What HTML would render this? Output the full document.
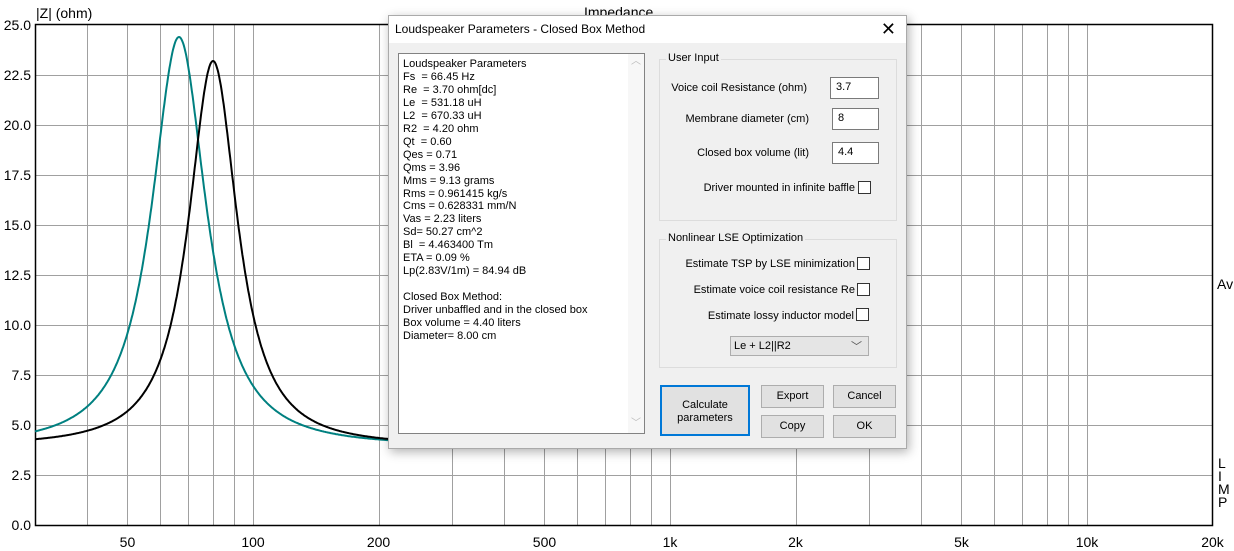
<!DOCTYPE html>
<html><head><meta charset="utf-8">
<style>
*{margin:0;padding:0;box-sizing:border-box}
body{width:1234px;height:551px;background:#fff;position:relative;overflow:hidden;font-family:"Liberation Sans",sans-serif}
.lbl{position:absolute;font-size:14px;color:#000;line-height:16px}
#dlg{position:absolute;left:388px;top:15px;width:519px;height:434px;background:#f0f0f0;border:1px solid #aaa;box-shadow:2px 3px 10px rgba(0,0,0,.3);font-size:12px}
#title{height:27px;background:#fff;position:relative;font-size:12px;line-height:27px;padding-left:6px}
#close{position:absolute;right:10px;top:0;font-size:18px;line-height:27px;font-weight:300}
#txt{position:absolute;left:9px;top:37px;width:247px;height:381px;background:#fff;border:1px solid #828282;font-size:11px;line-height:12.95px;padding:4px 0 0 4px;white-space:pre}
#sb{position:absolute;right:0;top:0;width:16px;height:100%;background:#f7f7f7}
.grp{position:absolute;border:1px solid #dcdcdc}
.gt{position:absolute;top:-8px;left:6px;background:#f0f0f0;padding:0 2px;font-size:11px}
.r{position:absolute;font-size:11px;text-align:right;white-space:nowrap}
.in{position:absolute;width:48px;height:22px;background:#fff;border:1px solid #7a7a7a;font-size:11px;padding:3px 0 0 5px}
.cb{position:absolute;width:13px;height:13px;border:1px solid #333;background:#fff}
.btn{position:absolute;background:#e1e1e1;border:1px solid #adadad;font-size:11px;text-align:center}
</style></head><body>
<svg id="plot" width="1234" height="551" style="position:absolute;left:0;top:0"></svg>
<div class="lbl" style="left:36px;top:5px">|Z| (ohm)</div>
<div class="lbl" style="left:584px;top:4px">Impedance</div>
<div class="lbl" style="left:1217px;top:276px">Av</div>
<div class="lbl" style="left:1218px;top:457px;line-height:13px">L<br>I<br>M<br>P</div>
<div id="dlg">
 <div id="title">Loudspeaker Parameters - Closed Box Method<span id="close">✕</span></div>
 <div id="txt">Loudspeaker Parameters
Fs  = 66.45 Hz
Re  = 3.70 ohm[dc]
Le  = 531.18 uH
L2  = 670.33 uH
R2  = 4.20 ohm
Qt  = 0.60
Qes = 0.71
Qms = 3.96
Mms = 9.13 grams
Rms = 0.961415 kg/s
Cms = 0.628331 mm/N
Vas = 2.23 liters
Sd= 50.27 cm^2
Bl  = 4.463400 Tm
ETA = 0.09 %
Lp(2.83V/1m) = 84.94 dB

Closed Box Method:
Driver unbaffled and in the closed box
Box volume = 4.40 liters
Diameter= 8.00 cm<div id="sb"><span style="position:absolute;left:3px;top:2px;color:#bbb;font-size:10px">︿</span><span style="position:absolute;left:3px;bottom:2px;color:#bbb;font-size:10px">﹀</span></div></div>
 <div class="grp" style="left:270px;top:43px;width:238px;height:162px"><span class="gt">User Input</span></div>
 <div class="r" style="left:200px;top:66px;width:218px">Voice coil Resistance (ohm)</div>
 <div class="in" style="left:441px;top:61px;width:49px">3.7</div>
 <div class="r" style="left:200px;top:97px;width:220px">Membrane diameter (cm)</div>
 <div class="in" style="left:443px;top:92px;width:47px">8</div>
 <div class="r" style="left:200px;top:131px;width:220px">Closed box volume (lit)</div>
 <div class="in" style="left:443px;top:126px;width:47px">4.4</div>
 <div class="r" style="left:200px;top:166px;width:266px">Driver mounted in infinite baffle</div>
 <div class="cb" style="left:469px;top:165px"></div>
 <div class="grp" style="left:270px;top:223px;width:238px;height:129px"><span class="gt">Nonlinear LSE Optimization</span></div>
 <div class="r" style="left:200px;top:242px;width:266px">Estimate TSP by LSE minimization</div>
 <div class="cb" style="left:468px;top:241px"></div>
 <div class="r" style="left:200px;top:268px;width:266px">Estimate voice coil resistance Re</div>
 <div class="cb" style="left:468px;top:267px"></div>
 <div class="r" style="left:200px;top:294px;width:265px">Estimate lossy inductor model</div>
 <div class="cb" style="left:467px;top:292px"></div>
 <div style="position:absolute;left:341px;top:320px;width:139px;height:20px;background:#e5e5e5;border:1px solid #adadad;font-size:11px;padding:3px 0 0 3px">Le + L2||R2<span style="position:absolute;right:6px;top:1px;color:#555">﹀</span></div>
 <div class="btn" style="left:271px;top:369px;width:90px;height:51px;border:2px solid #0078d7;padding-top:12px;line-height:13px">Calculate<br>parameters</div>
 <div class="btn" style="left:372px;top:369px;width:63px;height:23px;line-height:21px">Export</div>
 <div class="btn" style="left:444px;top:369px;width:63px;height:23px;line-height:21px">Cancel</div>
 <div class="btn" style="left:372px;top:399px;width:63px;height:23px;line-height:21px">Copy</div>
 <div class="btn" style="left:444px;top:399px;width:63px;height:23px;line-height:21px">OK</div>
</div>
<script>
var s=document.getElementById('plot'),h='';
function X(f){return 253+417*Math.log10(f/100)}
function Y(z){return 525-z*20}
var fs=[40,50,60,70,80,90,100,200,300,400,500,600,700,800,900,1000,2000,3000,4000,5000,6000,7000,8000,9000,10000];
fs.forEach(function(f){var x=Math.round(X(f))+.5;h+='<line x1="'+x+'" y1="24" x2="'+x+'" y2="525" stroke="#a0a0a0"/>'});
for(var i=1;i<10;i++){var y=Y(i*2.5)+.5;h+='<line x1="35" y1="'+y+'" x2="1212" y2="'+y+'" stroke="#a0a0a0"/>'}
h+='<rect x="35.5" y="24.5" width="1177" height="501" fill="none" stroke="#000" stroke-width="1.5"/>';
for(var i=0;i<=10;i++){var z=i*2.5;h+='<text x="31" y="'+(Y(z)+5)+'" text-anchor="end" font-size="14" font-family="Liberation Sans">'+z.toFixed(1)+'</text>'}
[[50,'50'],[100,'100'],[200,'200'],[500,'500'],[1000,'1k'],[2000,'2k'],[5000,'5k'],[10000,'10k'],[20000,'20k']].forEach(function(a){h+='<text x="'+X(a[0])+'" y="547" text-anchor="middle" font-size="14" font-family="Liberation Sans">'+a[1]+'</text>'});
function curve(Re,Rm,f0,Q,p,col){var pt='';for(var f=30;f<700;f*=1.004){var x=Q*(f/f0-f0/f);var z=Re+Rm/Math.pow(1+x*x,p);pt+=(pt?'L':'M')+X(f).toFixed(1)+','+Y(z).toFixed(1)}h+='<path d="'+pt+'" fill="none" stroke="'+col+'" stroke-width="2"/>'}
curve(4.0,20.4,66.45,2.6,1.1,'#008080');
curve(4.0,19.2,80.2,2.9,1.1,'#000');
s.innerHTML=h;
</script>
</body></html>
